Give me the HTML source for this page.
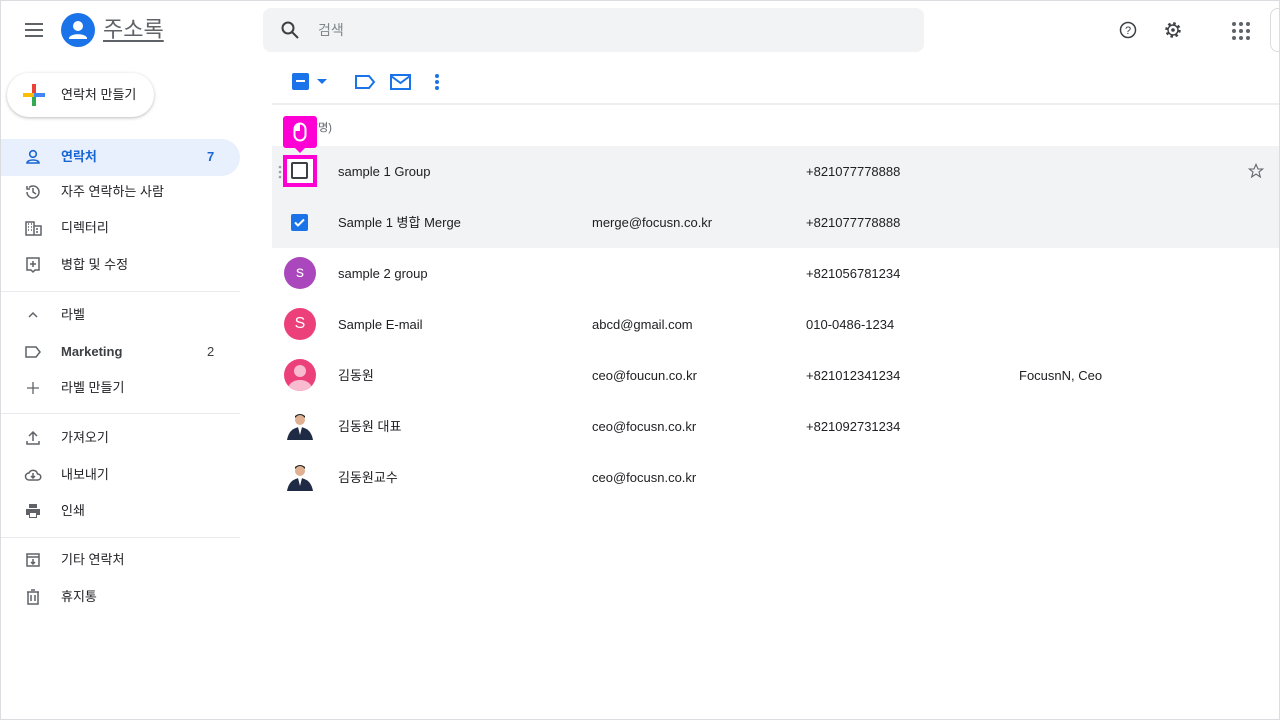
<!DOCTYPE html>
<html><head><meta charset="utf-8"><style>
*{box-sizing:border-box;margin:0;padding:0}
body{width:1280px;height:720px;background:#fff;font-family:"Liberation Sans","Noto Sans CJK KR",sans-serif;color:#202124;position:relative;overflow:hidden}
.a{position:absolute}
.nav{position:absolute;left:0;width:240px;height:36px;font-size:13px;line-height:36px}
.nav .ic{position:absolute;left:24px;top:9px;width:18px;height:18px}
.nav .t{position:absolute;left:61px;top:0}
.nav .n{position:absolute;left:207px;top:0}
.div{position:absolute;left:0;width:240px;height:1px;background:#e8eaed}
.row{position:absolute;left:272px;width:1008px;height:51px;font-size:13px}
.row span{position:absolute;top:0;line-height:51px}
.av{position:absolute;left:12px;top:9px;width:32px;height:32px;border-radius:50%;color:#fff;font-size:16px;text-align:center;line-height:32px}
</style></head><body>
<div class="a" style="left:0;top:0;width:1280px;height:720px;border:1px solid #dadce0;z-index:5;pointer-events:none"></div>
<!-- header -->
<svg class="a" style="left:24px;top:21px" width="20" height="18" viewBox="0 0 20 18"><path d="M1 3h18M1 9h18M1 15h18" stroke="#5f6368" stroke-width="2"/></svg>
<svg class="a" style="left:61px;top:13px" width="34" height="34" viewBox="0 0 34 34"><circle cx="17" cy="17" r="17" fill="#1a73e8"/><circle cx="17" cy="13" r="5" fill="#fff"/><path d="M8 25c1-5 17-5 18 0v1H8z" fill="#fff"/></svg>
<div class="a" style="left:103px;top:15px;font-size:22px;line-height:30px;color:#5f6368;text-decoration:underline;text-underline-offset:3px">주소록</div>
<div class="a" style="left:263px;top:8px;width:661px;height:44px;background:#f1f3f4;border-radius:8px"></div>
<svg class="a" style="left:280px;top:20px" width="20" height="20" viewBox="0 0 20 20"><circle cx="8" cy="8" r="5.5" stroke="#3c4043" stroke-width="2" fill="none"/><path d="M12 12l6 6" stroke="#3c4043" stroke-width="2"/></svg>
<div class="a" style="left:318px;top:20px;font-size:14px;line-height:20px;color:#80868b">검색</div>
<svg class="a" style="left:1119px;top:21px" width="18" height="18" viewBox="0 0 18 18"><circle cx="9" cy="9" r="7.5" fill="none" stroke="#3c4043" stroke-width="1.5"/><text x="9" y="13" font-size="11" text-anchor="middle" fill="#3c4043" font-family="Liberation Sans">?</text></svg>
<svg class="a" style="left:1164px;top:21px" width="18" height="18" viewBox="0 0 18 18"><circle cx="9" cy="9" r="6.5" fill="none" stroke="#3c4043" stroke-width="2.5" stroke-dasharray="2.5 2.6"/><circle cx="9" cy="9" r="5" fill="none" stroke="#3c4043" stroke-width="1.4"/><circle cx="9" cy="9" r="1.8" fill="#3c4043"/></svg>
<svg class="a" style="left:1232px;top:22px" width="18" height="18" viewBox="0 0 18 18" fill="#5f6368"><circle cx="2" cy="2" r="2"/><circle cx="9" cy="2" r="2"/><circle cx="16" cy="2" r="2"/><circle cx="2" cy="9" r="2"/><circle cx="9" cy="9" r="2"/><circle cx="16" cy="9" r="2"/><circle cx="2" cy="16" r="2"/><circle cx="9" cy="16" r="2"/><circle cx="16" cy="16" r="2"/></svg>
<div class="a" style="left:1270px;top:8px;width:20px;height:44px;border:1px solid #dadce0;border-radius:8px"></div>
<!-- create button -->
<div class="a" style="left:7px;top:73px;width:147px;height:44px;border-radius:22px;background:#fff;box-shadow:0 1px 3px rgba(60,64,67,.35)"></div>
<svg class="a" style="left:23px;top:84px" width="22" height="22" viewBox="0 0 22 22"><rect x="9" y="0" width="4" height="11" fill="#ea4335"/><rect x="9" y="11" width="4" height="11" fill="#34a853"/><rect x="0" y="9" width="11" height="4" fill="#fbbc04"/><rect x="11" y="9" width="11" height="4" fill="#4285f4"/></svg>
<div class="a" style="left:61px;top:85px;font-size:13px;line-height:20px">연락처 만들기</div>
<!-- nav -->
<div class="a" style="left:0;top:139px;width:240px;height:37px;background:#e8f0fe;border-radius:0 19px 19px 0"></div>
<div class="nav" style="top:139px;color:#1967d2;font-weight:bold"><svg class="ic" viewBox="0 0 18 18"><circle cx="9" cy="6" r="3.3" fill="none" stroke="#1967d2" stroke-width="1.6"/><path d="M3 15c0-4 12-4 12 0z" fill="none" stroke="#1967d2" stroke-width="1.6"/></svg><span class="t">연락처</span><span class="n">7</span></div>
<div class="nav" style="top:174px"><svg class="ic" viewBox="0 0 18 18"><path d="M3 9a6 6 0 1 0 2-4.5M3 3v3h3M9 5v4l3 2" fill="none" stroke="#5f6368" stroke-width="1.5"/></svg><span class="t">자주 연락하는 사람</span></div>
<div class="nav" style="top:210px"><svg class="ic" viewBox="0 0 18 18"><path d="M2 3h8v13H2zM10 7h7v9h-7M4 5h1M7 5h1M4 8h1M7 8h1M4 11h1M7 11h1M12 10h2M12 13h2" fill="none" stroke="#5f6368" stroke-width="1.5"/></svg><span class="t">디렉터리</span></div>
<div class="nav" style="top:247px"><svg class="ic" viewBox="0 0 18 18"><path d="M3 2h12v12h-4l-2 2-2-2H3zM9 5v6M6 8h6" fill="none" stroke="#5f6368" stroke-width="1.5"/></svg><span class="t">병합 및 수정</span></div>
<div class="div" style="top:291px"></div>
<div class="nav" style="top:297px"><svg class="ic" viewBox="0 0 18 18"><path d="M5 11l4-4 4 4" fill="none" stroke="#5f6368" stroke-width="1.5"/></svg><span class="t">라벨</span></div>
<div class="nav" style="top:334px"><svg class="ic" viewBox="0 0 18 18"><path d="M2 4h10l4 5-4 5H2z" fill="none" stroke="#5f6368" stroke-width="1.5"/></svg><span class="t" style="font-weight:bold;color:#3c4043">Marketing</span><span class="n" style="color:#3c4043">2</span></div>
<div class="nav" style="top:370px"><svg class="ic" viewBox="0 0 18 18"><path d="M9 3v12M3 9h12" stroke="#5f6368" stroke-width="1.3"/></svg><span class="t">라벨 만들기</span></div>
<div class="div" style="top:413px"></div>
<div class="nav" style="top:420px"><svg class="ic" viewBox="0 0 18 18"><path d="M9 12V3M5 7l4-4 4 4M3 12v3h12v-3" fill="none" stroke="#5f6368" stroke-width="1.5"/></svg><span class="t">가져오기</span></div>
<div class="nav" style="top:457px"><svg class="ic" viewBox="0 0 18 18"><path d="M5 14a3.5 3.5 0 0 1 0-7 4.5 4.5 0 0 1 8.5 1A3 3 0 0 1 14 14zM9 7v5M7 10l2 2 2-2" fill="none" stroke="#5f6368" stroke-width="1.5"/></svg><span class="t">내보내기</span></div>
<div class="nav" style="top:493px"><svg class="ic" viewBox="0 0 18 18"><path d="M5 2h8v4H5zM2 7h14v6h-3v3H5v-3H2z" fill="#5f6368"/><rect x="6" y="11" width="6" height="4" fill="#fff"/></svg><span class="t">인쇄</span></div>
<div class="div" style="top:537px"></div>
<div class="nav" style="top:542px"><svg class="ic" viewBox="0 0 18 18"><path d="M3 3h12v12H3zM3 6h12M9 8v5M7 11l2 2 2-2" fill="none" stroke="#5f6368" stroke-width="1.5"/></svg><span class="t">기타 연락처</span></div>
<div class="nav" style="top:579px"><svg class="ic" viewBox="0 0 18 18"><path d="M3 4h12M7 2h4M4 4v12h10V4M7 7v6M11 7v6" fill="none" stroke="#5f6368" stroke-width="1.5"/></svg><span class="t">휴지통</span></div>
<!-- toolbar -->
<div class="a" style="left:292px;top:73px;width:17px;height:17px;background:#1a73e8;border-radius:2px"><div style="position:absolute;left:4px;top:7px;width:9px;height:2px;background:#fff"></div></div>
<svg class="a" style="left:317px;top:79px" width="10" height="6"><path d="M0 0h10L5 5z" fill="#1a73e8"/></svg>
<svg class="a" style="left:354px;top:73px" width="22" height="18" viewBox="0 0 22 18"><path d="M2 3h13l5 6-5 6H2z" fill="none" stroke="#1a73e8" stroke-width="2"/></svg>
<svg class="a" style="left:390px;top:74px" width="21" height="16" viewBox="0 0 21 16"><rect x="1" y="1" width="19" height="14" fill="none" stroke="#1a73e8" stroke-width="2"/><path d="M1 2l9.5 7L20 2" fill="none" stroke="#1a73e8" stroke-width="2"/></svg>
<svg class="a" style="left:434px;top:73px" width="6" height="18"><circle cx="3" cy="3" r="2" fill="#1a73e8"/><circle cx="3" cy="9" r="2" fill="#1a73e8"/><circle cx="3" cy="15" r="2" fill="#1a73e8"/></svg>
<div class="a" style="left:272px;top:103px;width:1008px;height:2px;background:#eeeeee"></div>
<div class="a" style="left:312px;top:121px;font-size:11px;line-height:14px;color:#5f6368">7명)</div>
<!-- rows -->
<div class="row" style="top:146px;background:#f1f3f4"><span style="left:66px">sample 1 Group</span><span style="left:534px">+821077778888</span>
<svg style="position:absolute;left:976px;top:17px" width="16" height="16" viewBox="0 0 24 24"><path d="M12 2l3 7h7l-5.5 4.5 2 7.5L12 16.5 5.5 21l2-7.5L2 9h7z" fill="none" stroke="#5f6368" stroke-width="1.6"/></svg>
<svg style="position:absolute;left:6px;top:19px" width="4" height="14"><circle cx="2" cy="2" r="1.3" fill="#9aa0a6"/><circle cx="2" cy="7" r="1.3" fill="#9aa0a6"/><circle cx="2" cy="12" r="1.3" fill="#9aa0a6"/></svg></div>
<div class="row" style="top:197px;background:#f1f3f4"><span style="left:66px">Sample 1 병합 Merge</span><span style="left:320px">merge@focusn.co.kr</span><span style="left:534px">+821077778888</span>
<div style="position:absolute;left:19px;top:17px;width:17px;height:17px;background:#1a73e8;border-radius:2px"><svg width="17" height="17"><path d="M4 8.5l3 3 6-6" fill="none" stroke="#fff" stroke-width="2"/></svg></div></div>
<div class="row" style="top:248px"><div class="av" style="background:#ab47bc">s</div><span style="left:66px">sample 2 group</span><span style="left:534px">+821056781234</span></div>
<div class="row" style="top:299px"><div class="av" style="background:#ec407a">S</div><span style="left:66px">Sample E-mail</span><span style="left:320px">abcd@gmail.com</span><span style="left:534px">010-0486-1234</span></div>
<div class="row" style="top:350px"><div class="av" style="background:#ec407a;overflow:hidden"><svg width="32" height="32"><circle cx="16" cy="12" r="6" fill="#f8bbd0"/><ellipse cx="16" cy="30" rx="12" ry="9" fill="#f8bbd0"/></svg></div><span style="left:66px">김동원</span><span style="left:320px">ceo@foucun.co.kr</span><span style="left:534px">+821012341234</span><span style="left:747px">FocusnN, Ceo</span></div>
<div class="row" style="top:401px"><svg style="position:absolute;left:12px;top:9px" width="32" height="32"><circle cx="16" cy="10" r="5" fill="#e0b090"/><path d="M11 8q5-6 10 0v-2q-5-4-10 0z" fill="#222"/><path d="M3 30q2-12 13-13 11 1 13 13z" fill="#1f2a44"/><path d="M14 17h4l-2 8z" fill="#fff"/></svg><span style="left:66px">김동원 대표</span><span style="left:320px">ceo@focusn.co.kr</span><span style="left:534px">+821092731234</span></div>
<div class="row" style="top:452px"><svg style="position:absolute;left:12px;top:9px" width="32" height="32"><circle cx="16" cy="10" r="5" fill="#e0b090"/><path d="M11 8q5-6 10 0v-2q-5-4-10 0z" fill="#222"/><path d="M3 30q2-12 13-13 11 1 13 13z" fill="#1f2a44"/><path d="M14 17h4l-2 8z" fill="#fff"/></svg><span style="left:66px">김동원교수</span><span style="left:320px">ceo@focusn.co.kr</span></div>
<!-- magenta highlight -->
<div class="a" style="left:283px;top:155px;width:34px;height:32px;background:#ff00d4"></div>
<div class="a" style="left:287px;top:159px;width:26px;height:24px;background:#fff"></div>
<div class="a" style="left:291px;top:162px;width:17px;height:17px;border:2px solid #3c4043;border-radius:2px"></div>
<div class="a" style="left:283px;top:116px;width:34px;height:32px;background:#ff00d4;border-radius:3px"></div>
<svg class="a" style="left:294px;top:147px" width="12" height="7"><path d="M0 0h12L6 6z" fill="#ff00d4"/></svg>
<svg class="a" style="left:293px;top:122px" width="14" height="20" viewBox="0 0 14 20"><rect x="1.5" y="1.5" width="11" height="17" rx="5.5" fill="none" stroke="#fff" stroke-width="2"/><path d="M7 2v7H2V7q0-5 5-5z" fill="#fff"/></svg>
</body></html>
